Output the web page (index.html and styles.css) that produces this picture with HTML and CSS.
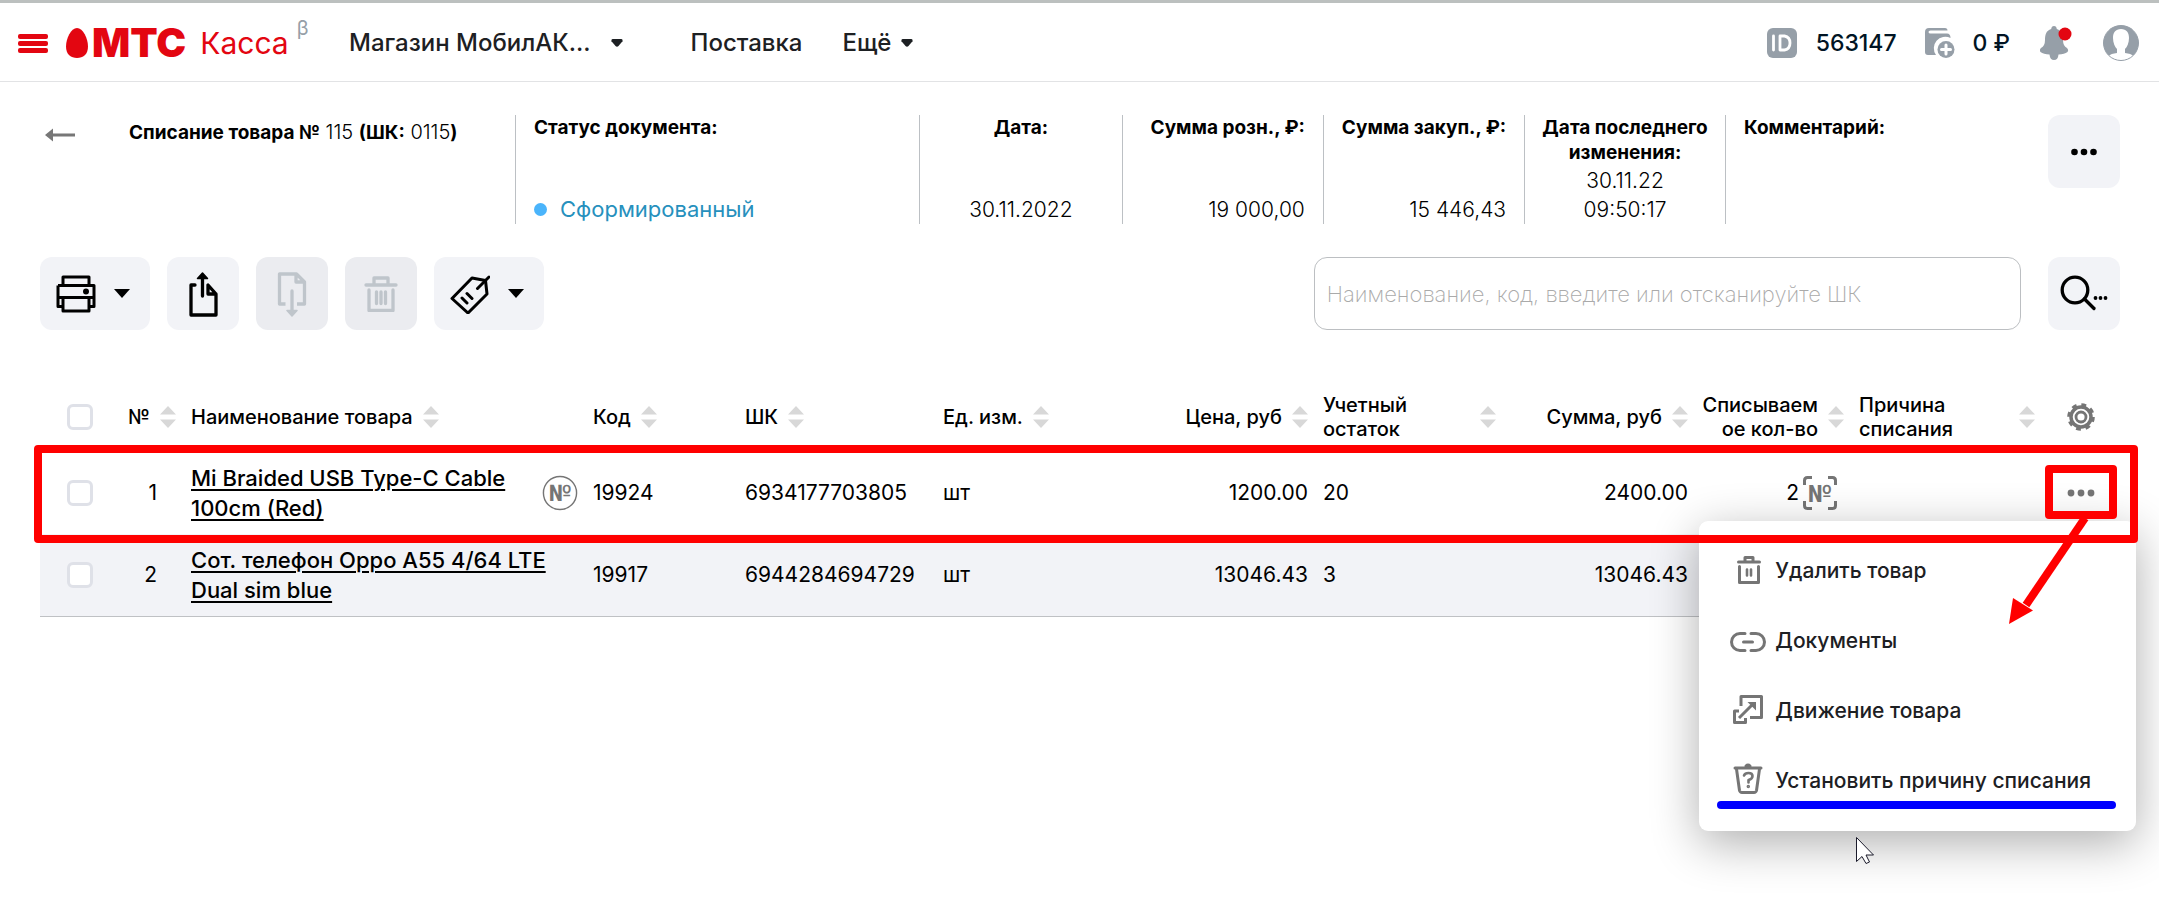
FILE: index.html
```html
<!DOCTYPE html>
<html lang="ru">
<head>
<meta charset="utf-8">
<title>МТС Касса — Списание товара</title>
<link rel="stylesheet" href="styles.css">
</head>
<body>
<svg class="defs" aria-hidden="true">
  <symbol id="sort" viewBox="0 0 16 22"><path d="M8 0l8 8.500H0zM8 22l8-8.500H0z" fill="#d8d8d8"/></symbol>
  <symbol id="caret" viewBox="0 0 16 9"><path d="M0 0h16L8 9z"/></symbol>
  <symbol id="navcaret" viewBox="0 0 12 8"><path d="M2 0h8q2 0 1.500 2.200L7.500 7q-1.500 1.600-3 0L.5 2.200Q0 0 2 0z"/></symbol>
</svg>

<header class="topbar">
  <button class="burger" aria-label="Меню"><i></i><i></i><i></i></button>
  <a class="logo" href="#">
    <svg class="egg" viewBox="0 0 22 30" aria-hidden="true"><path d="M11 0c6 0 11 10.500 11 18.500S17 30 11 30 0 26.500 0 18.500 5 0 11 0z" fill="#e30611"/></svg>
    <span class="mts">МТС</span><span class="kassa">Касса</span><span class="beta">β</span>
  </a>
  <nav class="nav">
    <button class="nav-item shop">Магазин МобилАК... <svg class="navcaret"><use href="#navcaret"/></svg></button>
    <a class="nav-item supply" href="#">Поставка</a>
    <button class="nav-item more">Ещё <svg class="navcaret"><use href="#navcaret"/></svg></button>
  </nav>
  <div class="account">
    <svg class="i30" viewBox="0 0 30 30" aria-hidden="true"><rect width="30" height="30" rx="6" fill="#969fa8"/><g fill="none" stroke="#fff" stroke-width="2.800" stroke-linecap="round"><path d="M6.500 8v14"/><path d="M13 8h4.500q5.500 1 5.500 7t-5.500 7H13z" stroke-linejoin="round"/></g></svg>
    <span class="acc-id">563147</span>
    <svg class="i30 wallet" viewBox="0 0 30 30" aria-hidden="true"><path d="M4 0h16q2.500 0 2.500 2.500H5.500Q3.500 2.500 3.500 4t2 1.500H22q3.500 0 3.500 4.500A11.500 11.500 0 0 0 11 27H3q-3 0-3-3V4Q0 0 4 0z" fill="#969fa8"/><circle cx="21" cy="21.500" r="8.500" fill="#969fa8"/><path d="M21 17v9M16.500 21.500h9" stroke="#fff" stroke-width="3" stroke-linecap="round"/></svg>
    <span class="acc-sum">0 ₽</span>
    <button class="bell" aria-label="Уведомления"><svg viewBox="0 0 32 36" aria-hidden="true"><path d="M14 1q2.500 0 2.800 3C22 5.500 23 10 23 15q0 6 4 8 2 2 .500 4-3 2-9 2.500Q18 35 14 35t-4.500-5.500Q3.500 29 .5 27-1 25 1 23q4-2 4-8c0-5 1-9.500 6.200-11Q11.500 1 14 1z" fill="#969fa8"/><circle cx="25" cy="9" r="6.500" fill="#e30611"/></svg></button>
    <button class="avatar" aria-label="Профиль"><svg viewBox="0 0 36 36" aria-hidden="true"><circle cx="18" cy="18" r="17.500" fill="#969fa8"/><path d="M18 4c5.500 0 8 3.500 8 9 0 5-2 9-4 11v4q6 .5 8.500 3A17 17 0 0 1 5.500 31q2.500-2.500 8.500-3v-4c-2-2-4-6-4-11 0-5.500 2.500-9 8-9z" fill="#fff"/><circle cx="18" cy="18" r="17.500" fill="none" stroke="#969fa8"/></svg></button>
  </div>
</header>

<main class="page">
  <section class="doc">
    <a class="back" href="#" aria-label="Назад"><svg viewBox="0 0 30 14" aria-hidden="true"><path d="M0 7l8-6.500v5H30v3H8v5z" fill="#777"/></svg></a>
    <h1 class="doc-title"><b>Списание товара №</b> 115 <b>(ШК:</b> 0115<b>)</b></h1>
    <dl class="facts">
      <div class="fact status"><dt>Статус документа:</dt><dd><i class="dot"></i>Сформированный</dd></div>
      <div class="fact date"><dt>Дата:</dt><dd>30.11.2022</dd></div>
      <div class="fact sum"><dt>Сумма розн., ₽:</dt><dd>19 000,00</dd></div>
      <div class="fact sum"><dt>Сумма закуп., ₽:</dt><dd>15 446,43</dd></div>
      <div class="fact changed"><dt>Дата последнего изменения:</dt><dd>30.11.22<br>09:50:17</dd></div>
      <div class="fact comment"><dt>Комментарий:</dt><dd></dd></div>
    </dl>
    <button class="tool" aria-label="Ещё действия"><svg width="26" height="8" viewBox="0 0 26 8"><circle cx="3.500" cy="4" r="3.300"/><circle cx="13" cy="4" r="3.300"/><circle cx="22.500" cy="4" r="3.300"/></svg></button>
  </section>

  <section class="toolbar">
    <button class="tool wide" aria-label="Печать">
      <svg width="40" height="38" viewBox="0 0 40 38" fill="none" stroke="#000" stroke-width="3" stroke-linejoin="round"><path d="M7 10V2h26v8M2 10.500h36v21H33M7 31.500H2v-21M2 22.500h36M7 22.500V36h26V22.500"/><circle cx="30" cy="16.500" r="1.500" fill="#000"/></svg>
      <svg class="caret"><use href="#caret"/></svg>
    </button>
    <button class="tool" aria-label="Выгрузить">
      <svg width="30" height="46" viewBox="0 0 30 46" fill="none" stroke="#000" stroke-width="3.300" stroke-linejoin="round" stroke-linecap="round"><path d="M7 14H3v30h25V23l-8-9v9h8"/><path d="M14.500 25V6"/><path d="M9.500 7.500L14.500 2l5 5.500z" fill="#000" stroke-width="1.500"/></svg>
    </button>
    <button class="tool" disabled aria-label="Загрузить">
      <svg width="30" height="46" viewBox="0 0 30 46" fill="none" stroke="#bfc5cb" stroke-width="3.300" stroke-linejoin="round"><path d="M8.500 33H2.500V3h17l8 8v22H20M19 3v8h8"/><path d="M15 20v20" stroke-linecap="round"/><path d="M10 39.500h10L15 45z" fill="#bfc5cb" stroke-width="1.500"/></svg>
    </button>
    <button class="tool" disabled aria-label="Удалить">
      <svg width="34" height="36" viewBox="0 0 34 36" fill="none" stroke="#bfc5cb" stroke-width="3.300" stroke-linejoin="round" stroke-linecap="round"><path d="M2 9h30M10 8V2h14v6M5 14v20.500h24V14M12.500 16v11.500M17 16v11.500M21.500 16v11.500"/></svg>
    </button>
    <button class="tool wide" aria-label="Ценники">
      <svg width="40" height="40" viewBox="0 0 40 40" fill="none" stroke="#000" stroke-width="3" stroke-linejoin="round" stroke-linecap="round"><path d="M2 24.500L22 4l13.500 2.500L37 20 18 39z"/><path d="M27.500 14.500L39 3M17 19.500l5 5M12 24l5 5"/></svg>
      <svg class="caret"><use href="#caret"/></svg>
    </button>
    <input class="search" type="search" aria-label="Поиск товара" placeholder="Наименование, код, введите или отсканируйте ШК">
    <button class="tool" aria-label="Расширенный поиск">
      <svg width="48" height="38" viewBox="0 0 48 38" fill="none" stroke="#000" stroke-width="3.300" stroke-linecap="round"><circle cx="15" cy="15" r="12.800"/><path d="M24.500 24L34 33.500"/><g fill="#000" stroke="none"><circle cx="35.500" cy="23" r="1.900"/><circle cx="40.500" cy="23" r="1.900"/><circle cx="45.500" cy="23" r="1.900"/></g></svg>
    </button>
  </section>

  <section class="goods">
    <table>
      <colgroup><col class="c-check"><col class="c-num"><col class="c-name"><col class="c-code"><col class="c-bar"><col class="c-unit"><col class="c-price"><col class="c-rest"><col class="c-sum"><col class="c-qty"><col class="c-reason"><col class="c-act"></colgroup>
      <thead>
        <tr>
          <th class="check"><input type="checkbox" aria-label="Выбрать все"></th>
          <th><div class="h end">№ <svg class="sort"><use href="#sort"/></svg></div></th>
          <th><div class="h">Наименование товара <svg class="sort"><use href="#sort"/></svg></div></th>
          <th><div class="h">Код <svg class="sort"><use href="#sort"/></svg></div></th>
          <th><div class="h">ШК <svg class="sort"><use href="#sort"/></svg></div></th>
          <th><div class="h">Ед. изм. <svg class="sort"><use href="#sort"/></svg></div></th>
          <th><div class="h end">Цена, руб <svg class="sort"><use href="#sort"/></svg></div></th>
          <th><div class="h spread"><span>Учетный<br>остаток</span><svg class="sort"><use href="#sort"/></svg></div></th>
          <th><div class="h end">Сумма, руб <svg class="sort"><use href="#sort"/></svg></div></th>
          <th><div class="h end"><span class="right">Списываем<br>ое кол-во</span><svg class="sort"><use href="#sort"/></svg></div></th>
          <th><div class="h spread"><span>Причина<br>списания</span><svg class="sort"><use href="#sort"/></svg></div></th>
          <th class="act"><button class="plain" aria-label="Настройки таблицы"><svg width="28" height="28" viewBox="0 0 28 28" fill="none" stroke="#757575"><circle cx="14" cy="14" r="10" stroke-width="3.500"/><circle cx="14" cy="14" r="12.300" stroke-width="3" stroke-dasharray="4.830 4.830"/><circle cx="14" cy="14" r="5" stroke-width="2.800"/></svg></button></th>
        </tr>
      </thead>
      <tbody>
        <tr>
          <td class="check"><input type="checkbox" aria-label="Выбрать строку 1"></td>
          <td class="num">1</td>
          <td><div class="name"><a href="#">Mi Braided USB Type-C Cable 100cm (Red)</a><svg class="serial" viewBox="0 0 38 38"><circle cx="19" cy="19" r="17.500" fill="none" stroke="#757575" stroke-width="1.500"/><text x="19" y="27" text-anchor="middle">№</text></svg></div></td>
          <td>19924</td>
          <td>6934177703805</td>
          <td>шт</td>
          <td class="right">1200.00</td>
          <td>20</td>
          <td class="right">2400.00</td>
          <td><div class="qty">2<svg class="scan" viewBox="0 0 34 34"><path d="M1.500 9V4.500q0-3 3-3H9M25 1.500h4.500q3 0 3 3V9M32.500 25v4.500q0 3-3 3H25M9 32.500H4.500q-3 0-3-3V25" fill="none" stroke="#757575" stroke-width="3"/><text x="17" y="26" text-anchor="middle">№</text></svg></div></td>
          <td></td>
          <td class="act">
            <button class="plain" aria-label="Действия с товаром" aria-expanded="true"><svg width="28" height="8" viewBox="0 0 28 8" fill="#757575"><circle cx="4" cy="4" r="3.400"/><circle cx="14" cy="4" r="3.400"/><circle cx="24" cy="4" r="3.400"/></svg></button>
            <div class="menu" role="menu">
              <button role="menuitem"><svg viewBox="0 0 36 36" fill="none" stroke="#757575" stroke-width="3" stroke-linecap="round" stroke-linejoin="round"><path d="M8.500 9h21M15 8V4.500h8V8M9.500 13.500v16h19v-16"/><path d="M17 16.500v6M21 16.500v6" stroke-width="2.600"/></svg>Удалить товар</button>
              <button role="menuitem"><svg viewBox="0 0 36 36" fill="none" stroke="#757575" stroke-width="3" stroke-linecap="round"><path d="M15 10.500h-5a8.500 8.500 0 0 0 0 17h5M21 10.500h5a8.500 8.500 0 0 1 0 17h-5M13.500 19h9"/></svg>Документы</button>
              <button role="menuitem"><svg viewBox="0 0 36 36" fill="none" stroke="#757575" stroke-width="3" stroke-linejoin="round"><path d="M11 13V3.500h20.500v21H20M9 18H4.500v11.500h11V25"/><path d="M9 25l14.500-14.500"/><path d="M17.500 9H26v8.500z" fill="#757575" stroke="none"/></svg>Движение товара</button>
              <button role="menuitem"><svg viewBox="0 0 36 36" fill="none" stroke="#757575" stroke-width="3" stroke-linejoin="round" stroke-linecap="round"><path d="M5 5h26M6.500 6l3 21.500q.5 2 2.500 2h12q2 0 2.500-2L29.500 6M16 3q2-2 4 0"/><path d="M14 12.500q1-2.500 4.500-2.500 4 0 4 3t-4 4v2.500" stroke-width="2.600"/><circle cx="18.300" cy="23.500" r="1" stroke-width="1.500"/></svg>Установить причину списания</button>
            </div>
            <i class="mark-dots"></i>
            <i class="mark-line"></i>
            <svg class="mark-arrow" viewBox="0 0 80 110"><path d="M76 0L17 87" stroke="#f00" stroke-width="8"/><path d="M4 80l20 12.500L0 106z" fill="#f00"/></svg>
            <svg class="pointer" viewBox="0 0 18 27"><path d="M.5.500v24l5.500-5 4 7 3.500-1.500-3.500-7h7.500z" fill="#fff" stroke="#1b1b2b"/></svg>
          </td>
        </tr>
        <tr>
          <td class="check"><input type="checkbox" aria-label="Выбрать строку 2"></td>
          <td class="num">2</td>
          <td><div class="name"><a href="#">Сот. телефон Oppo A55 4/64 LTE Dual sim blue</a></div></td>
          <td>19917</td>
          <td>6944284694729</td>
          <td>шт</td>
          <td class="right">13046.43</td>
          <td>3</td>
          <td class="right">13046.43</td>
          <td></td>
          <td></td>
          <td></td>
        </tr>
      </tbody>
    </table>
    <i class="mark-row"></i>
  </section>
</main>
</body>
</html>
```
FILE: styles.css
```css
* { box-sizing: border-box; }
body { min-height: 100vh; margin: 0; background: #fff; color: #000; font: 400 21px/30px Inter, "Noto Sans", sans-serif; }
button { border: 0; padding: 0; background: none; font: inherit; color: inherit; cursor: pointer; }
a { color: inherit; }
svg { display: block; flex: none; }
.defs { position: absolute; width: 0; height: 0; }

.topbar { display: flex; align-items: center; height: 82px; padding: 2px 20px 0 18px; border-top: 3px solid #bcc0bf; border-bottom: 1px solid #e2e3e5; }
.burger { display: flex; flex-direction: column; gap: 2px; width: 30px; margin-right: 18px; }
.burger i { height: 5px; border-radius: 2px; background: #e30611; }
.logo { display: flex; align-items: center; width: 283px; color: #e30611; text-decoration: none; }
.egg { width: 22px; height: 30px; margin-right: 4px; }
.mts { font-size: 40px; font-weight: 900; margin-right: 14px; }
.kassa { font-size: 30px; }
.beta { align-self: flex-start; margin-left: 8px; font-size: 20px; line-height: 1px; color: #969fa8; }
.nav { display: flex; align-items: center; font-size: 24px; font-weight: 500; color: #1d2023; }
.nav-item { display: flex; align-items: center; text-decoration: none; }
.shop { gap: 20px; margin-right: 68px; }
.supply { margin-right: 40px; }
.more { gap: 10px; }
.navcaret { width: 12px; height: 8px; fill: #1d2023; }
.account { display: flex; align-items: center; margin-left: auto; font-size: 23px; font-weight: 500; color: #001424; }
.i30 { width: 30px; height: 30px; }
.acc-id { margin: 0 28px 0 19px; }
.acc-sum { margin: 0 30px 0 18px; }
.bell svg { width: 32px; height: 36px; }
.avatar { margin-left: 31px; }
.avatar svg { width: 36px; height: 36px; }

.page { padding: 33px 39px 0 40px; }
.doc { display: flex; align-items: flex-start; min-height: 109px; }
.back { flex: none; width: 89px; padding: 13px 0 0 5px; }
.back svg { width: 30px; height: 14px; }
.doc-title { flex: none; width: 386px; margin: 0; padding-top: 4px; font-size: 20px; line-height: 26px; font-weight: 300; white-space: nowrap; }
.doc-title b { font-size: 19px; font-weight: 700; }
.facts { display: grid; grid-template-columns: 404fr 203fr 201fr 201fr 201fr 323fr; flex: 1; margin: 0; align-self: stretch; }
.fact { display: flex; flex-direction: column; justify-content: space-between; padding: 0 18px; border-left: 1px solid #bcc0c4; }
.fact dt { font-size: 19px; line-height: 25px; font-weight: 700; }
.fact dd { margin: 0; font-size: 21px; line-height: 29px; font-weight: 300; }
.status dd { display: flex; align-items: center; gap: 13px; font-size: 22px; font-weight: 400; color: #2690bd; }
.dot { width: 13px; height: 13px; border-radius: 50%; background: #4ab4fb; }
.date, .changed { text-align: center; }
.fact.sum { align-items: flex-end; white-space: nowrap; }
.fact.changed { padding: 0 12px; }

.tool { display: flex; flex: none; align-items: center; justify-content: center; width: 72px; height: 73px; border-radius: 12px; background: #f2f3f7; }
.tool:disabled { background: #ebecf0; }
.wide { width: 110px; gap: 18px; padding-right: 5px; }
.caret { width: 16px; height: 9px; }
.toolbar { display: flex; gap: 17px; margin-top: 33px; }
.search { width: 34%; height: 73px; margin: 0 10px 0 auto; padding: 0 12px; border: 1px solid #bcbfc2; border-radius: 13px; outline: 0; background: #fff; font: 200 22px Inter, sans-serif; }
.search::placeholder { color: #aaa; }

.goods { position: relative; margin-top: 52px; }
table { width: 100%; table-layout: fixed; border-collapse: collapse; }
.c-check { width: 81px; }
.c-num { width: 62px; }
.c-name { width: 402px; }
.c-code { width: 152px; }
.c-bar { width: 198px; }
.c-unit { width: 192px; }
.c-price { width: 188px; }
.c-rest { width: 188px; }
.c-sum { width: 192px; }
.c-qty { width: 156px; }
.c-reason { width: 191px; }
.c-act { width: 78px; }
th, td { padding: 0 7px 0 8px; text-align: left; vertical-align: middle; }
th { height: 70px; font-size: 20px; line-height: 24px; font-weight: 500; white-space: nowrap; }
td { height: 82px; }
tbody tr:nth-child(even) { background: #f2f3f7; border-bottom: 1px solid #bfc1c4; }
.h { display: flex; align-items: center; gap: 10px; }
.end { justify-content: flex-end; }
.spread { justify-content: space-between; }
.right { text-align: right; }
.sort { width: 16px; height: 22px; }
.check { padding: 0 0 0 27px; }
.check input { display: block; appearance: none; width: 26px; height: 26px; margin: 0; border: 3px solid #dfe1e8; border-radius: 6px; background: #fff; }
.num { padding-right: 26px; text-align: right; }
.name { display: flex; align-items: center; justify-content: space-between; }
.name a { max-width: 360px; font-size: 22px; font-weight: 500; text-decoration-thickness: 2px; text-underline-offset: 3px; }
.serial { width: 36px; height: 36px; }
.serial text, .scan text { fill: #757575; font: 700 24px "Liberation Sans Narrow", Roboto, sans-serif; }
.qty { display: flex; align-items: center; justify-content: flex-end; gap: 4px; padding-right: 7px; }
.scan { width: 34px; height: 34px; }
.act { position: relative; padding: 0; }
.plain { display: flex; justify-content: center; width: 100%; }

.menu { position: absolute; z-index: 1; top: 69px; right: -16px; display: flex; flex-direction: column; padding: 15px 0; border-radius: 9px; background: #fff; box-shadow: 0 12px 48px rgba(0, 0, 0, .32); }
.menu button { display: flex; align-items: center; gap: 9px; height: 70px; padding: 0 45px 0 31px; font-weight: 500; white-space: nowrap; color: #1d2023; }
.menu svg { width: 36px; height: 36px; }

.mark-row { position: absolute; z-index: 2; top: 63px; right: -18px; left: -6px; height: 98px; border: 8px solid #f00; border-radius: 4px; pointer-events: none; }
.mark-dots { position: absolute; z-index: 2; top: 13px; right: 3px; width: 72px; height: 54px; border: 8px solid #f00; border-radius: 4px; pointer-events: none; }
.mark-line { position: absolute; z-index: 2; top: 349px; right: 4px; width: 399px; height: 8px; border-radius: 4px; background: #00f; }
.mark-arrow { position: absolute; z-index: 2; top: 66px; right: 31px; width: 80px; height: 110px; }
.pointer { position: absolute; z-index: 2; top: 385px; right: 246px; width: 18px; height: 27px; }
```
